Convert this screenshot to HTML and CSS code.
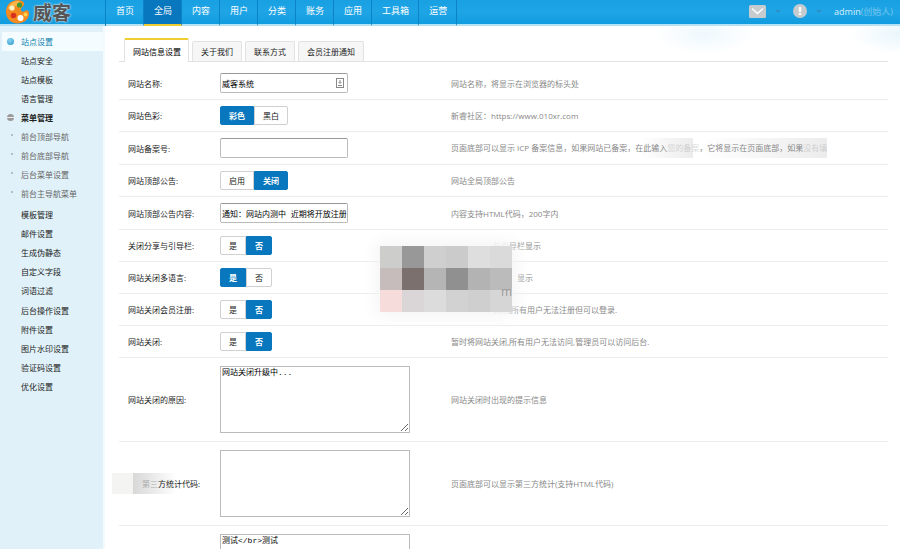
FILE: index.html
```html
<!DOCTYPE html>
<html lang="zh-CN">
<head>
  <meta charset="UTF-8" />
  <meta name="viewport" content="width=device-width, initial-scale=1.0" />
  <title>威客 | 站点设置</title>
  <link rel="stylesheet" href="styles.css">
</head>
<body>
  <header class="topbar">
    <a class="logo" href="#">
      <svg width="24" height="24" viewBox="0 0 24 24" aria-hidden="true">
        <path d="M12 0C5 0 0 5 0 11.500C0 18.500 5 23.500 11.500 23.500C17 23.500 22.500 20 23 14C23.300 10.500 21 9.500 19 11C17 12.500 14.500 11.500 15 9C15.500 6.500 19 6 18 3C17 .8 14.500 0 12 0Z" fill="#f58a1f"/>
        <path d="M12 1C6 1 2 6 1.500 10C5 5 11 8 13 3.500C14 2 14 1 12 1Z" fill="#fbb64a"/>
        <circle cx="13.500" cy="5" r="2.600" fill="#3f9b35"/>
        <circle cx="6" cy="8" r="2.600" fill="#fff3c4"/>
        <circle cx="7.500" cy="15.500" r="2.800" fill="#d8321f"/>
        <circle cx="14.500" cy="18" r="3" fill="#fff"/>
        <circle cx="19.500" cy="14.500" r="2" fill="#ffd34d"/>
      </svg>
      <span>威客</span>
    </a>
    <nav class="nav">
      <a href="#">首页</a>
      <a href="#" class="active">全局</a>
      <a href="#">内容</a>
      <a href="#">用户</a>
      <a href="#">分类</a>
      <a href="#">账务</a>
      <a href="#">应用</a>
      <a href="#">工具箱</a>
      <a href="#">运营</a>
    </nav>
    <div class="user">
      <button type="button" class="icon-btn" aria-label="消息">
        <svg width="17" height="13" viewBox="0 0 17 13"><rect width="17" height="13" rx="1.500" fill="#c5cbce"/><path d="M3 3.500L8.500 8.500L14 3.500" fill="none" stroke="#fff" stroke-width="1.300"/></svg>
        <i class="caret"></i>
      </button>
      <button type="button" class="icon-btn" aria-label="提醒">
        <svg width="14" height="14" viewBox="0 0 14 14"><circle cx="7" cy="7" r="7" fill="#c5cbce"/><path d="M5.800 3h2.400v5H5.800zM5.800 9h2.400v2H5.800z" fill="#fff"/></svg>
        <i class="caret"></i>
      </button>
      <a href="#">admin<span>(创始人)</span></a>
    </div>
  </header>

  <div class="layout">
    <aside class="sidebar">
      <ul class="menu">
        <li class="current"><a href="#">站点设置</a></li>
        <li><a href="#">站点安全</a></li>
        <li><a href="#">站点模板</a></li>
        <li><a href="#">语言管理</a></li>
        <li class="open"><a href="#">菜单管理</a>
          <ul class="submenu">
            <li><a href="#">前台顶部导航</a></li>
            <li><a href="#">前台底部导航</a></li>
            <li><a href="#">后台菜单设置</a></li>
            <li><a href="#">前台主导航菜单</a></li>
          </ul>
        </li>
        <li><a href="#">模板管理</a></li>
        <li><a href="#">邮件设置</a></li>
        <li><a href="#">生成伪静态</a></li>
        <li><a href="#">自定义字段</a></li>
        <li><a href="#">词语过滤</a></li>
      </ul>
      <ul class="menu">
        <li><a href="#">后台操作设置</a></li>
        <li><a href="#">附件设置</a></li>
        <li><a href="#">图片水印设置</a></li>
        <li><a href="#">验证码设置</a></li>
        <li><a href="#">优化设置</a></li>
      </ul>
    </aside>

    <main class="content">
      <nav class="tabs">
        <a href="#" class="active">网站信息设置</a>
        <a href="#">关于我们</a>
        <a href="#">联系方式</a>
        <a href="#">会员注册通知</a>
      </nav>

      <form class="settings">
        <div class="row first">
          <label for="site-name">网站名称:</label>
          <div class="field">
            <input type="text" id="site-name" value="威客系统">
            <svg class="field-icon" width="8" height="10" viewBox="0 0 8 10"><rect x=".5" y=".5" width="7" height="9" fill="#fff" stroke="#888"/><path d="M4 2v3M2.500 4L4 5.500L5.500 4M2 7.500h4" fill="none" stroke="#888"/></svg>
          </div>
          <p>网站名称，将显示在浏览器的标头处</p>
        </div>
        <div class="row">
          <span class="label">网站色彩:</span>
          <div class="toggle">
            <label><input type="radio" name="color" checked><span>彩色</span></label>
            <label><input type="radio" name="color"><span>黑白</span></label>
          </div>
          <p>新睿社区：https://www.010xr.com</p>
        </div>
        <div class="row">
          <label for="icp">网站备案号:</label>
          <div class="field"><input type="text" id="icp"></div>
          <p class="icp-hint">页面底部可以显示 ICP 备案信息，如果网站已备案，在此输入<span class="faint">您的备案</span>，它将显示在页面底部，如果<span class="faint">没有填</span></p>
        </div>
        <div class="row">
          <span class="label">网站顶部公告:</span>
          <div class="toggle">
            <label><input type="radio" name="notice"><span>启用</span></label>
            <label><input type="radio" name="notice" checked><span>关闭</span></label>
          </div>
          <p>网站全局顶部公告</p>
        </div>
        <div class="row">
          <label for="notice-text">网站顶部公告内容:</label>
          <div class="field"><input type="text" id="notice-text" value="通知：网站内测中 近期将开放注册"></div>
          <p>内容支持HTML代码，200字内</p>
        </div>
        <div class="row">
          <span class="label">关闭分享与引导栏:</span>
          <div class="toggle">
            <label><input type="radio" name="share"><span>是</span></label>
            <label><input type="radio" name="share" checked><span>否</span></label>
          </div>
          <p class="indent"><span class="faint">与引</span>导栏显示</p>
        </div>
        <div class="row">
          <span class="label">网站关闭多语言:</span>
          <div class="toggle">
            <label><input type="radio" name="lang" checked><span>是</span></label>
            <label><input type="radio" name="lang"><span>否</span></label>
          </div>
          <p class="indent-wide">显示</p>
        </div>
        <div class="row">
          <span class="label">网站关闭会员注册:</span>
          <div class="toggle">
            <label><input type="radio" name="register"><span>是</span></label>
            <label><input type="radio" name="register" checked><span>否</span></label>
          </div>
          <p class="indent"><span class="faint">关闭</span>,所有用户无法注册但可以登录.</p>
        </div>
        <div class="row">
          <span class="label">网站关闭:</span>
          <div class="toggle">
            <label><input type="radio" name="closed"><span>是</span></label>
            <label><input type="radio" name="closed" checked><span>否</span></label>
          </div>
          <p>暂时将网站关闭,所有用户无法访问,管理员可以访问后台.</p>
        </div>
        <div class="row tall">
          <label for="reason">网站关闭的原因:</label>
          <div class="field"><textarea id="reason">网站关闭升级中...</textarea></div>
          <p>网站关闭时出现的提示信息</p>
        </div>
        <div class="row tall">
          <label for="stats" class="stats-label"><span class="faint">第三</span>方统计代码:</label>
          <div class="field"><textarea id="stats"></textarea></div>
          <p>页面底部可以显示第三方统计(支持HTML代码)</p>
        </div>
        <div class="row tall">
          <span class="label"></span>
          <div class="field"><textarea aria-label="测试">测试&lt;/br&gt;测试</textarea></div>
          <p></p>
        </div>
      </form>

      <!-- pixelated patch over the form -->
      <div class="mosaic" aria-hidden="true">
        <i></i><i></i><i></i><i></i><i></i><i></i>
        <i></i><i></i><i></i><i></i><i></i><i></i>
        <i></i><i></i><i></i><i></i><i></i><i></i>
        <span>m</span>
      </div>
    </main>
  </div>
</body>
</html>
```
FILE: styles.css
```css
* {
  box-sizing: border-box;
}

body {
  margin: 0;
  background: #fff;
  color: #222;
  font-family: "Open Sans", "Noto Sans CJK SC", sans-serif;
  font-size: 8px;
}

a {
  color: inherit;
  text-decoration: none;
}

ul {
  list-style: none;
  margin: 0;
  padding: 0;
}

.topbar {
  display: flex;
  height: 26px;
  background: linear-gradient(#18a0e2, #1fa5e6 50%, #109ce0);
  border-bottom: 2px solid #b5e1f5;
}

.logo {
  display: flex;
  align-items: center;
  gap: 3px;
  width: 105px;
  padding-left: 6px;
  color: #555;
  font-family: "Noto Sans CJK SC", sans-serif;
  font-size: 19px;
  font-weight: bold;
  line-height: 24px;
  text-shadow: 0 0 2px #d5e4ea, 0 0 2px #d5e4ea;
}

.nav {
  display: flex;
  height: 26px;
  border-left: 1px solid #0b83c6;
}

.nav a {
  padding: 0 9px 0 10px;
  border-right: 1px solid #0b83c6;
  border-bottom: 2px solid #b5e1f5;
  color: #fff;
  font-size: 9px;
  line-height: 22px;
}

.nav a.active {
  background: #0877bd;
  border-bottom-color: #f0cc30;
}

.user {
  display: flex;
  align-items: center;
  gap: 12px;
  margin-left: auto;
  padding: 0 7px 2px 0;
  color: #d5eefa;
  font-size: 9px;
}

.user span {
  color: #74c5ed;
}

.icon-btn {
  display: flex;
  align-items: center;
  gap: 9px;
  padding: 0;
  border: 0;
  background: none;
}

.caret {
  border: 3px solid transparent;
  border-top-color: #2c8fc6;
  border-bottom: 0;
}

.layout {
  display: flex;
  min-height: calc(100vh - 26px);
}

.sidebar {
  flex: none;
  width: 105px;
  padding-top: 6px;
  background: #e0f1f9;
  border-right: 2px solid #f2fafd;
}

.menu a {
  display: block;
  height: 19px;
  padding-left: 21px;
  line-height: 19px;
}

.menu + .menu {
  margin-top: 1px;
}

.menu .current {
  margin-left: 2px;
  background: #f5fcff;
  color: #0e7fae;
}

.menu .current a {
  padding-left: 19px;
}

.current a::before,
.open > a::before {
  content: "";
  float: left;
  width: 7px;
  height: 7px;
  margin: 6px 0 0 -14px;
  border-radius: 50%;
  background: radial-gradient(circle at 40% 30%, #8cd4f2, #2596c8);
}

.open > a {
  font-weight: bold;
}

.open > a::before {
  background: linear-gradient(#999 40%, #eee 40%, #eee 60%, #999 60%);
}

.submenu {
  margin-bottom: 2px;
  color: #666;
}

.submenu a::before {
  content: "";
  float: left;
  width: 2px;
  height: 2px;
  margin: 7px 0 0 -10px;
  background: #b0bfc6;
}

.content {
  position: relative;
  flex: 1;
  min-width: 0;
  padding: 12px 12px 0 14px;
  background:
    radial-gradient(ellipse 50px 20px at 100% 8px, #e9f6fc, transparent),
    radial-gradient(ellipse 50px 20px at 600px 8px, #eef8fd, transparent) no-repeat;
}

.tabs {
  display: flex;
  align-items: flex-end;
  gap: 3px;
  height: 24px;
  padding-left: 5px;
  border-bottom: 1px solid #e2e2e2;
}

.tabs a {
  height: 20px;
  padding: 0 8px;
  border: 1px solid #e2e2e2;
  border-bottom: 0;
  border-radius: 2px 2px 0 0;
  background: #f6f6f6;
  line-height: 19px;
}

.tabs a.active {
  height: 24px;
  margin-bottom: -1px;
  padding: 0 7px 0 8px;
  border-top: 2px solid #f0cc30;
  background: #fff;
  color: #000;
  line-height: 23px;
}

.row {
  display: grid;
  grid-template-columns: 92px 231px 1fr;
  align-items: center;
  padding: 6px 0 6px 9px;
  border-bottom: 1px solid #ececec;
}

.row.first {
  padding-top: 11px;
}

.row.tall {
  padding-top: 8px;
  padding-bottom: 8px;
}

.row p {
  margin: 0;
  color: #888;
  white-space: nowrap;
}

.row .indent {
  padding-left: 42px;
}

.row .indent-wide {
  padding-left: 66px;
}

.faint {
  opacity: 0.3;
}

.field {
  display: flex;
  position: relative;
}

.field-icon {
  position: absolute;
  top: 5px;
  left: 116px;
}

.field input,
.field textarea {
  border: 1px solid #bbb;
  background: #fff;
  color: #000;
  font-family: "Liberation Mono", "Noto Sans CJK SC", monospace;
  font-size: 8px;
}

.field input {
  width: 128px;
  height: 20px;
  padding: 0 0 0 1px;
  border-top-color: #999;
  border-radius: 2px;
}

.field textarea {
  width: 190px;
  height: 67px;
  padding: 0 1px;
  line-height: 12px;
}

.toggle {
  display: flex;
  height: 19px;
}

.toggle label {
  position: relative;
}

.toggle input {
  position: absolute;
  inset: 0;
  margin: 0;
  opacity: 0;
}

.toggle span {
  display: block;
  height: 19px;
  padding: 0 8px;
  border: 1px solid #d0d0d0;
  line-height: 17px;
}

.toggle label:first-child span {
  border-radius: 2px 0 0 2px;
}

.toggle label:last-child span {
  border-radius: 0 2px 2px 0;
}

.toggle input:checked + span {
  border-color: #0877bd;
  background: #0877bd;
  color: #fff;
  font-weight: bold;
}

.row .icp-hint {
  width: 376px;
  line-height: 20px;
  background:
    linear-gradient(90deg, transparent, #ececec) 190px 0 / 52px 100% no-repeat,
    linear-gradient(90deg, transparent, #ececec) 250px 0 / 126px 100% no-repeat;
}

.row .stats-label {
  margin-left: -16px;
  padding: 5px 0 5px 30px;
  background:
    linear-gradient(#f4f4f2, #f4f4f2) 0 0 / 21px 100% no-repeat,
    linear-gradient(90deg, #d8d8d8, transparent) 21px 0 / 44px 100% no-repeat;
}

.mosaic {
  position: absolute;
  top: 220px;
  left: 275px;
  display: grid;
  grid-template-columns: repeat(6, 22px);
  grid-auto-rows: 22px;
  box-shadow: 0 0 16px 4px #f4f4f4;
  background: #d6d6d6;
}

.mosaic i:nth-child(1) { background: #cdcdcb; }
.mosaic i:nth-child(2) { background: #989898; }
.mosaic i:nth-child(3) { background: #cfcfcf; }
.mosaic i:nth-child(4) { background: #cbcbcb; }
.mosaic i:nth-child(5) { background: #dedede; }
.mosaic i:nth-child(6) { background: #dadada; }
.mosaic i:nth-child(7) { background: #c7bcbc; }
.mosaic i:nth-child(8) { background: #7c706f; }
.mosaic i:nth-child(9) { background: #b5b5b5; }
.mosaic i:nth-child(10) { background: #909090; }
.mosaic i:nth-child(11) { background: #b3b3b3; }
.mosaic i:nth-child(12) { background: #bbb; }
.mosaic i:nth-child(13) { background: #f6dcda; }
.mosaic i:nth-child(14) { background: #dad5d7; }
.mosaic i:nth-child(15) { background: #dcdcdc; }
.mosaic i:nth-child(16) { background: #d2d2d2; }
.mosaic i:nth-child(17) { background: #cfcfcf; }
.mosaic i:nth-child(18) { background: #d6d6d6; }

.mosaic span {
  position: absolute;
  right: 0;
  top: 40px;
  color: #999;
  font-size: 12px;
  line-height: 12px;
}
```
